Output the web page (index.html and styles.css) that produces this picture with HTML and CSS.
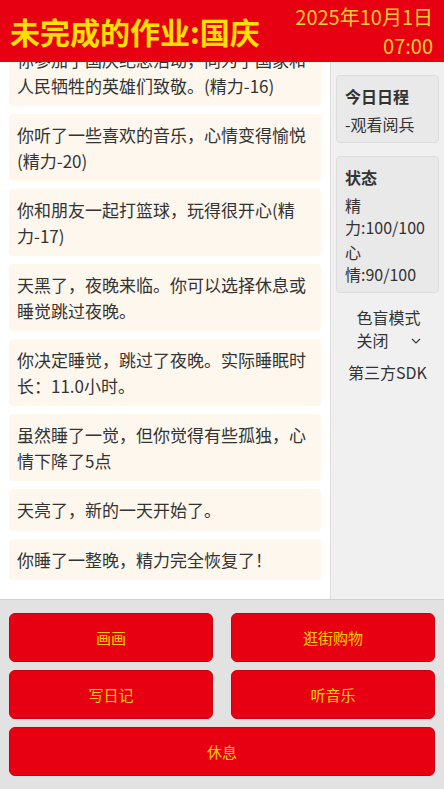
FILE: index.html
```html
<!DOCTYPE html>
<html lang="zh-CN">
<head>
<meta charset="utf-8">
<title>未完成的作业:国庆</title>
<link rel="stylesheet" href="styles.css">
</head>
<body>
<div class="app">
  <header class="topbar">
    <h1 class="title">未完成的作业:国庆</h1>
    <div class="datetime">
      <div>2025年10月1日</div>
      <div>07:00</div>
    </div>
  </header>
  <main class="main">
    <section class="log">
      <div class="msg">你参加了国庆纪念活动，向为了国家和人民牺牲的英雄们致敬。(精力-16)</div>
      <div class="msg">你听了一些喜欢的音乐，心情变得愉悦(精力-20)</div>
      <div class="msg">你和朋友一起打篮球，玩得很开心(精力-17)</div>
      <div class="msg">天黑了，夜晚来临。你可以选择休息或睡觉跳过夜晚。</div>
      <div class="msg">你决定睡觉，跳过了夜晚。实际睡眠时长：11.0小时。</div>
      <div class="msg">虽然睡了一觉，但你觉得有些孤独，心情下降了5点</div>
      <div class="msg">天亮了，新的一天开始了。</div>
      <div class="msg">你睡了一整晚，精力完全恢复了！</div>
    </section>
    <aside class="side">
      <div class="panel">
        <div class="panel-title">今日日程</div>
        <p class="panel-line">-观看阅兵</p>
      </div>
      <div class="panel">
        <div class="panel-title">状态</div>
        <p class="panel-line">精力:100/100</p>
        <p class="panel-line">心情:90/100</p>
      </div>
      <div class="mode">
        <div class="mode-label">色盲模式</div>
        <div class="mode-select">
          <span>关闭</span>
          <svg class="chev" width="10" height="6" viewBox="0 0 10 6"><path d="M1 1 L5 5 L9 1" fill="none" stroke="#333" stroke-width="1.1"/></svg>
        </div>
      </div>
      <div class="sdk">第三方SDK</div>
    </aside>
  </main>
  <footer class="actions">
    <button class="btn">画画</button>
    <button class="btn">逛街购物</button>
    <button class="btn">写日记</button>
    <button class="btn">听音乐</button>
    <button class="btn btn-wide">休息</button>
  </footer>
</div>
</body>
</html>
```

FILE: styles.css
```css
* { box-sizing: border-box; }
html, body {
  margin: 0;
  padding: 0;
  height: 100%;
  overflow: hidden;
}
body {
  font-family: "Noto Sans CJK SC", "Noto Sans", sans-serif;
  color: #333;
  background: #fff;
}
.app {
  display: flex;
  flex-direction: column;
  height: 789px;
}
.topbar {
  height: 62px;
  flex: none;
  background: #e60012;
  display: flex;
  align-items: center;
  justify-content: space-between;
  padding: 0 11px 0 10px;
  position: relative;
  z-index: 2;
}
.title {
  margin: 0;
  font-size: 30px;
  font-weight: 700;
  color: #ffe000;
  line-height: 1;
}
.datetime {
  text-align: right;
  font-size: 20px;
  line-height: 29px;
  color: #ffcc33;
}
.main {
  flex: 1;
  display: flex;
  min-height: 0;
}
.log {
  width: 330px;
  flex: none;
  background: #fff;
  display: flex;
  flex-direction: column;
  justify-content: flex-end;
  gap: 8px;
  padding: 0 9px 19px 9px;
  overflow: hidden;
}
.msg {
  flex: none;
  background: #fdf7ee;
  border-radius: 4px;
  padding: 8px;
  font-size: 17px;
  line-height: 1.5;
  color: #333;
}
.side {
  flex: 1;
  background: #f0f0f0;
  border-left: 1px solid #dcdcdc;
  padding: 13px 5px 0 5px;
  display: flex;
  flex-direction: column;
  gap: 13px;
}
.panel {
  background: #e9e9e9;
  border: 1px solid #dddddd;
  border-radius: 4px;
  padding: 8px 8px 7px 8px;
  font-size: 16px;
}
.panel-title {
  font-weight: 700;
  line-height: 24px;
  margin-bottom: 5px;
}
.panel-line {
  margin: 0;
  line-height: 22px;
}
.panel-line + .panel-line {
  margin-top: 3px;
}
.mode {
  width: 64px;
  align-self: center;
  font-size: 16px;
  line-height: 23px;
  margin-left: 2px;
}
.mode-select {
  display: flex;
  align-items: center;
  justify-content: space-between;
  width: 64px;
  padding-right: 0;
}
.chev { display: block; }
.sdk {
  text-align: center;
  font-size: 16px;
  line-height: 23px;
  margin-top: -4px;
}
.actions {
  flex: none;
  height: 190px;
  background: #e2e2e2;
  border-top: 1px solid #cfcfcf;
  padding: 13px 9px 12px 9px;
  display: grid;
  grid-template-columns: 1fr 1fr;
  grid-auto-rows: 49px;
  column-gap: 18px;
  row-gap: 8px;
}
.btn {
  background: #e60012;
  border: 1px solid #c9000f;
  border-radius: 6px;
  color: #ffd000;
  font-family: "Noto Sans CJK SC", "Noto Sans", sans-serif;
  font-size: 15px;
  padding: 0;
}
.btn-wide {
  grid-column: 1 / 3;
}
```
